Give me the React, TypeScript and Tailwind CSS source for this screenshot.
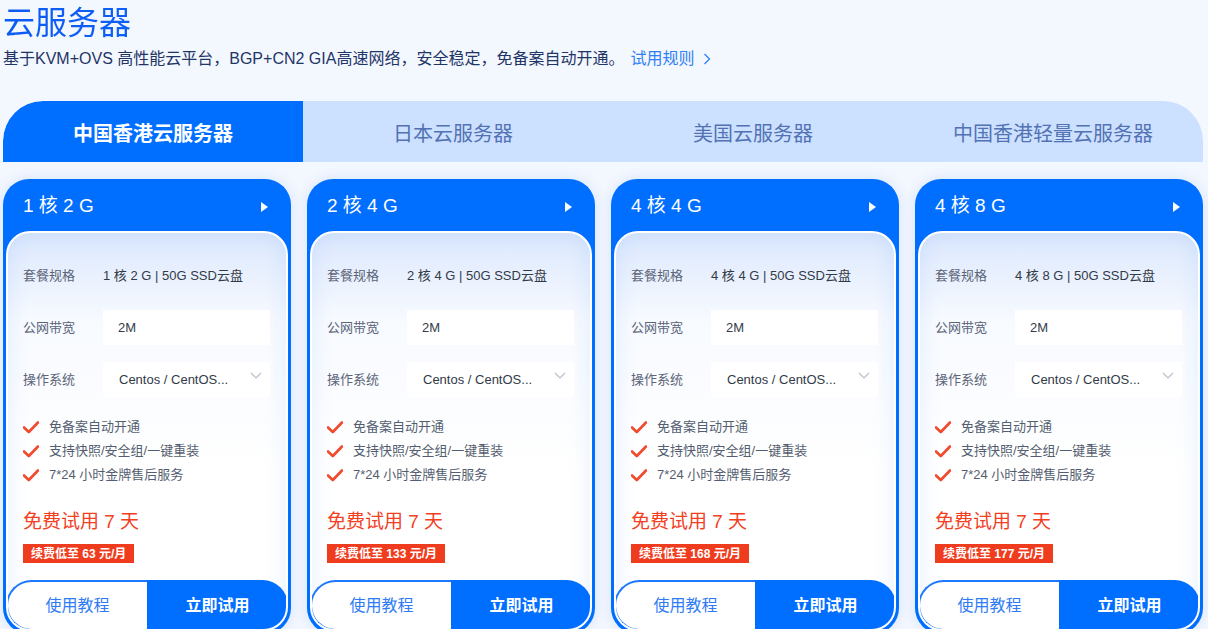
import React, { useState } from "react";

type Plan = {
  name: string;
  spec: string;
  price: number;
};

const plans: Plan[] = [
  { name: "1 核 2 G", spec: "1 核 2 G | 50G SSD云盘", price: 63 },
  { name: "2 核 4 G", spec: "2 核 4 G | 50G SSD云盘", price: 133 },
  { name: "4 核 4 G", spec: "4 核 4 G | 50G SSD云盘", price: 168 },
  { name: "4 核 8 G", spec: "4 核 8 G | 50G SSD云盘", price: 177 },
];

const tabs = ["中国香港云服务器", "日本云服务器", "美国云服务器", "中国香港轻量云服务器"];

const features = ["免备案自动开通", "支持快照/安全组/一键重装", "7*24 小时金牌售后服务"];

const CheckIcon = () => (
  <svg width="16" height="13" viewBox="0 0 16 13" className="shrink-0">
    <path d="M1 6.5 L5.8 11 L15 1.5" fill="none" stroke="#f2482b" strokeWidth="2.6" strokeLinecap="round" strokeLinejoin="round" />
  </svg>
);

const PlanCard: React.FC<{ plan: Plan }> = ({ plan }) => {
  return (
    <div className="flex flex-col rounded-[26px] bg-[#006eff] px-[3px] pb-[3px] shadow-[0_0_14px_rgba(0,110,255,0.12)]">
      <div className="flex h-[52px] items-center justify-between pl-[17px] pr-[20px] pt-[3px]">
        <span className="text-[19px] text-white">{plan.name}</span>
        <svg width="7" height="10" viewBox="0 0 7 10">
          <path d="M0 0 L7 5 L0 10 Z" fill="#ffffff" />
        </svg>
      </div>
      <div className="flex flex-col overflow-hidden rounded-[24px] border-2 border-white bg-[linear-gradient(180deg,#dce8fd_0%,#f7faff_22%,#ffffff_60%,#ffffff_100%)] shadow-[inset_0_0_22px_rgba(40,120,240,0.12)]">
        <div className="flex flex-col px-[15px] pt-[33px]">
          <div className="flex h-[20px] items-center text-[13px]">
            <span className="w-[80px] text-[#5b6478]">套餐规格</span>
            <span className="text-[#333a48]">{plan.spec}</span>
          </div>
          <div className="mt-[24px] flex items-center text-[13px]">
            <span className="w-[80px] text-[#5b6478]">公网带宽</span>
            <div className="flex h-[35px] w-[167px] items-center bg-white pl-[15px] text-[#333a48]">2M</div>
          </div>
          <div className="mt-[17px] flex items-center text-[13px]">
            <span className="w-[80px] text-[#5b6478]">操作系统</span>
            <div className="flex h-[35px] w-[167px] items-center justify-between bg-white pl-[16px] pr-[8px] text-[#333a48]">
              <span>Centos / CentOS...</span>
              <svg width="12" height="7" viewBox="0 0 12 7" className="-mt-[8px]">
                <path d="M1 1 L6 6 L11 1" fill="none" stroke="#b8bfcc" strokeWidth="1.2" />
              </svg>
            </div>
          </div>
          <div className="mt-[18px] flex flex-col">
            {features.map((f) => (
              <div key={f} className="flex h-[24px] items-center gap-[10px] text-[13px] text-[#555e70]">
                <CheckIcon />
                <span>{f}</span>
              </div>
            ))}
          </div>
          <div className="mt-[21px] h-[28px] text-[19px] leading-[28px] text-[#f2401f]">免费试用 7 天</div>
          <div className="mt-[8px] flex">
            <span className="flex h-[19px] items-center bg-[#f03c1e] px-[8px] text-[12px] font-bold text-white">
              续费低至 {plan.price} 元/月
            </span>
          </div>
        </div>
        <div className="-mx-[2px] -mb-[2px] mt-[17px] flex h-[51px] text-[16px]">
          <button className="flex w-[141px] items-center justify-center rounded-l-full border-2 border-r-0 border-[#1c78ff] bg-white text-[#2f7bf5]">
            使用教程
          </button>
          <button className="flex flex-1 items-center justify-center rounded-r-full bg-[#006eff] font-bold text-white">
            立即试用
          </button>
        </div>
      </div>
    </div>
  );
};

const App: React.FC = () => {
  const [active, setActive] = useState(0);

  return (
    <div className="min-h-screen bg-[#f3f7fe] font-['Liberation_Sans','Noto_Sans_CJK_SC',sans-serif]">
      <div className="ml-[3px] w-[1200px]">
        <h1 className="h-[46px] bg-[linear-gradient(90deg,#0b5af5,#2c8dff)] bg-clip-text text-[32px] leading-[46px] text-transparent">
          云服务器
        </h1>
        <p className="mt-[2px] flex h-[22px] items-center text-[16px] text-[#1f3566]">
          基于KVM+OVS 高性能云平台，BGP+CN2 GIA高速网络，安全稳定，免备案自动开通。
          <a className="ml-[6px] flex items-center text-[#2f80f5]">
            试用规则
            <svg width="8" height="12" viewBox="0 0 8 12" className="ml-[9px]">
              <path d="M1.5 1 L6.5 6 L1.5 11" fill="none" stroke="#2f80f5" strokeWidth="1.3" />
            </svg>
          </a>
        </p>
        <div className="mt-[31px] grid h-[61px] grid-cols-4 overflow-hidden rounded-t-[40px] bg-[#cce0ff]">
          {tabs.map((t, i) => (
            <button
              key={t}
              onClick={() => setActive(i)}
              className={
                i === active
                  ? "flex items-center justify-center rounded-tl-[40px] bg-[#006eff] pt-[4px] text-[20px] font-bold text-white"
                  : "flex items-center justify-center pt-[4px] text-[20px] text-[#5272b4]"
              }
            >
              {t}
            </button>
          ))}
        </div>
        <div className="mt-[17px] grid grid-cols-4 gap-4">
          {plans.map((p) => (
            <PlanCard key={p.name} plan={p} />
          ))}
        </div>
      </div>
    </div>
  );
};

export default App;
